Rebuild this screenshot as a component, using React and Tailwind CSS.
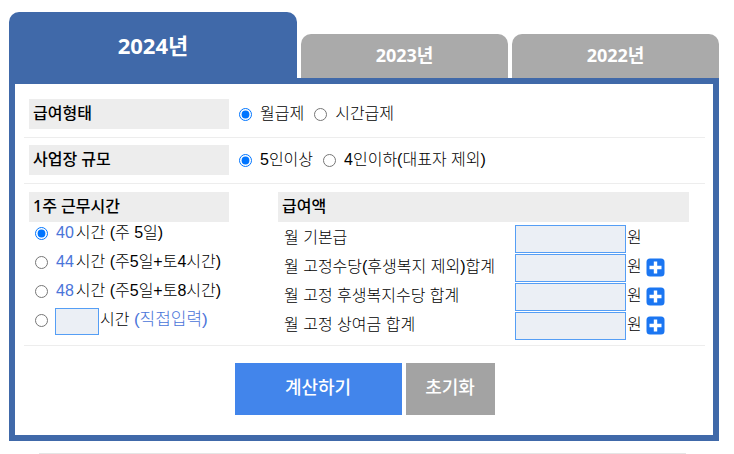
import React, { useState } from 'react';

const years = ['2024', '2023', '2022'];

const weekHours = [
  { value: '40', note: '(주 5일)' },
  { value: '44', note: '(주5일+토4시간)' },
  { value: '48', note: '(주5일+토8시간)' },
];

const payItems = [
  { id: 'base', label: '월 기본급', addable: false },
  { id: 'allowance', label: '월 고정수당(후생복지 제외)합계', addable: true },
  { id: 'welfare', label: '월 고정 후생복지수당 합계', addable: true },
  { id: 'bonus', label: '월 고정 상여금 합계', addable: true },
];

function PlusIcon() {
  return (
    <svg viewBox="0 0 19 19" className="block w-[19px] h-[19px]" aria-hidden="true">
      <rect x="0.5" y="0.5" width="18" height="18" rx="3.5" fill="#1b76f2" />
      <path d="M9.5 3.5v12M3.5 9.5h12" stroke="#fff" strokeWidth="3.4" fill="none" />
    </svg>
  );
}

function SectionLabel({ children }) {
  return (
    <h3 className="h-[30px] px-1 bg-[#ededed] text-base leading-7 font-medium font-['Noto_Sans','Noto_Sans_CJK_KR',sans-serif]">
      {children}
    </h3>
  );
}

function Radio({ name, checked, onChange, children }) {
  return (
    <label className="flex items-center gap-2">
      <input type="radio" name={name} checked={checked} onChange={onChange} className="w-[13px] h-[13px] shrink-0 mt-px" />
      <span>{children}</span>
    </label>
  );
}

export default function App() {
  const [year, setYear] = useState('2024');
  const [payType, setPayType] = useState('month');
  const [size, setSize] = useState('5');
  const [hours, setHours] = useState('40');

  return (
    <div className="pt-3 pl-[9px] pr-[15px] bg-white text-black text-base leading-5 font-light font-['Liberation_Sans','Noto_Sans_CJK_KR',sans-serif]">
      <div className="grid grid-cols-[288fr_207fr_207fr] gap-1 items-end">
        {years.map((y) => (
          <button
            key={y}
            type="button"
            onClick={() => setYear(y)}
            className={
              y === year
                ? "h-[66px] rounded-t-[10px] bg-[#4069a9] text-white text-[22px] font-bold font-['Noto_Sans','Noto_Sans_CJK_KR',sans-serif]"
                : "h-11 pb-[2px] rounded-t-[10px] bg-[#aaaaaa] text-white text-lg font-bold font-['Noto_Sans','Noto_Sans_CJK_KR',sans-serif]"
            }
          >
            {y}년
          </button>
        ))}
      </div>

      <form className="border-[6px] border-[#4069a9] pt-2 pl-[9px] pr-2 pb-5" onSubmit={(e) => e.preventDefault()}>
        <div className="flex items-center gap-[10px] px-[5px] pt-[7px] pb-2 border-b border-[#ededed]">
          <div className="w-[200px]">
            <SectionLabel>급여형태</SectionLabel>
          </div>
          <div className="flex gap-[10px]">
            <Radio name="payType" checked={payType === 'month'} onChange={() => setPayType('month')}>월급제</Radio>
            <Radio name="payType" checked={payType === 'hour'} onChange={() => setPayType('hour')}>시간급제</Radio>
          </div>
        </div>

        <div className="flex items-center gap-[10px] px-[5px] pt-[7px] pb-2 border-b border-[#ededed]">
          <div className="w-[200px]">
            <SectionLabel>사업장 규모</SectionLabel>
          </div>
          <div className="flex gap-[10px]">
            <Radio name="size" checked={size === '5'} onChange={() => setSize('5')}>5인이상</Radio>
            <Radio name="size" checked={size === '4'} onChange={() => setSize('4')}>4인이하(대표자 제외)</Radio>
          </div>
        </div>

        <div className="flex gap-[49px] pl-[5px] pr-4 pt-2 pb-[5px] border-b border-[#ededed]">
          <div className="w-[200px]">
            <SectionLabel>1주 근무시간</SectionLabel>
            <div className="flex flex-col gap-[9px] pt-px pl-[6px] whitespace-nowrap">
              {weekHours.map((h) => (
                <Radio key={h.value} name="hours" checked={hours === h.value} onChange={() => setHours(h.value)}>
                  <span className="text-[#4a74d9] mr-[2px]">{h.value}</span>
                  시간 {h.note}
                </Radio>
              ))}
              <div className="flex items-center h-5">
                <input
                  type="radio"
                  name="hours"
                  aria-label="직접입력"
                  checked={hours === 'custom'}
                  onChange={() => setHours('custom')}
                  className="w-[13px] h-[13px] mt-px mr-[7px]"
                />
                <input type="text" id="customHours" className="w-11 h-[27px] mt-[3px] px-1 border border-[#559ef5] bg-[#ebeff5]" />
                <label htmlFor="customHours" className="pl-px">
                  시간 <span className="text-[17px] text-[#4a74d9]">(직접입력)</span>
                </label>
              </div>
            </div>
          </div>

          <div className="flex-1">
            <SectionLabel>급여액</SectionLabel>
            <div className="flex flex-col gap-px pt-[3px]">
              {payItems.map((item) => (
                <div key={item.id} className="flex items-center h-7 pl-[6px]">
                  <label htmlFor={item.id} className="w-[231px] pb-[2px]">{item.label}</label>
                  <input type="text" id={item.id} className="w-[111px] h-7 px-1 border border-[#559ef5] bg-[#ebeff5]" />
                  <span className="pl-px pb-[2px]">원</span>
                  {item.addable && (
                    <button type="button" aria-label={item.label + ' 추가'} className="ml-1 pb-[2px]">
                      <PlusIcon />
                    </button>
                  )}
                </div>
              ))}
            </div>
          </div>
        </div>

        <div className="flex justify-center gap-1 pt-[17px] text-white text-lg font-medium font-['Noto_Sans','Noto_Sans_CJK_KR',sans-serif]">
          <button type="submit" className="w-[167px] h-[52px] pb-1 bg-[#4285eb]">계산하기</button>
          <button type="reset" className="w-[89px] h-[52px] pb-1 bg-[#a3a3a3]">초기화</button>
        </div>
      </form>

      <hr className="mt-3 ml-[30px] mr-[33px] border-[#e5e5e5]" />
    </div>
  );
}
